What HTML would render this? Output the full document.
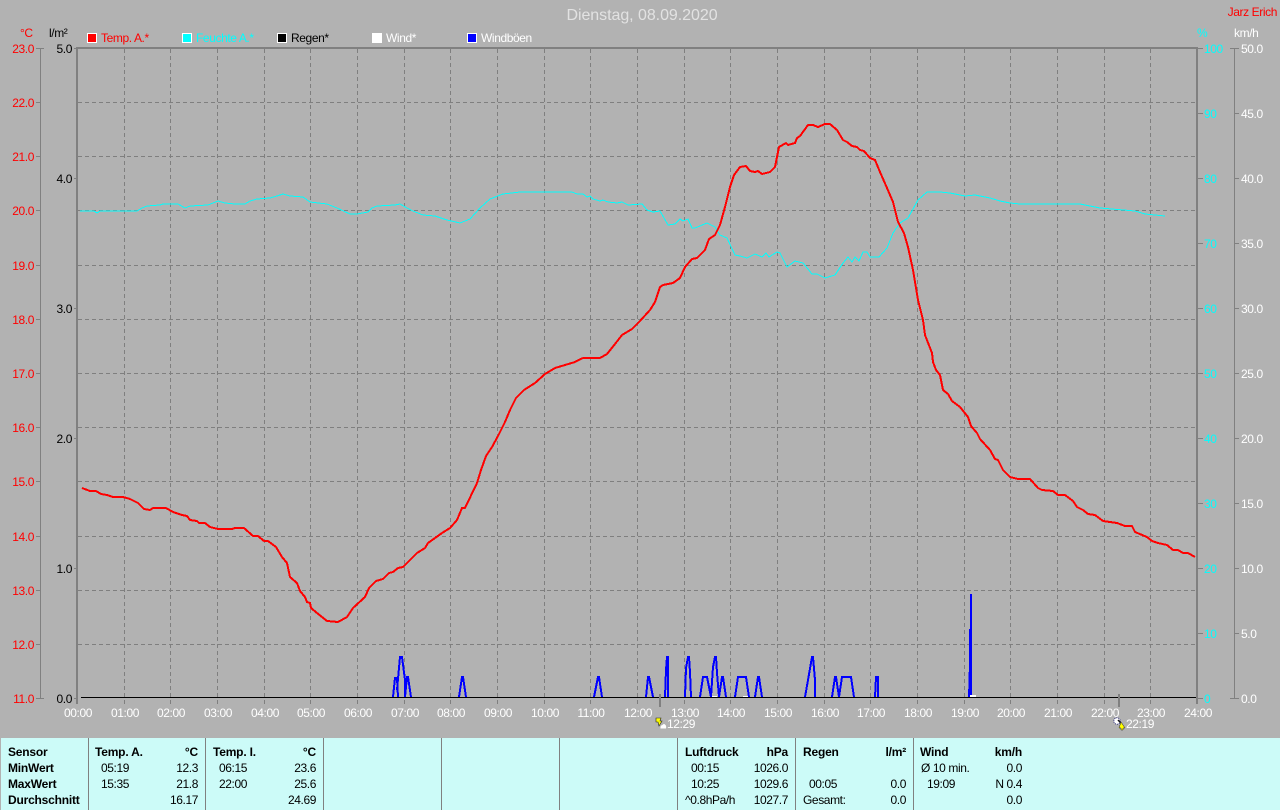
<!DOCTYPE html>
<html><head><meta charset="utf-8"><title>Dienstag, 08.09.2020</title>
<style>
html,body{margin:0;padding:0;background:#b2b2b2;width:1280px;height:810px;overflow:hidden}
svg{display:block}
text{font-family:"Liberation Sans",sans-serif;font-size:12px;letter-spacing:-.4px}
.b text{font-weight:bold;letter-spacing:-.2px}
.e{text-anchor:end}
</style></head><body>
<svg width="1280" height="810" viewBox="0 0 1280 810" xmlns="http://www.w3.org/2000/svg">
<rect width="1280" height="810" fill="#b2b2b2"/>

<text x="642" y="20" text-anchor="middle" fill="#e2e2e2" style="font-size:16px;letter-spacing:-.05px">Dienstag, 08.09.2020</text>
<text x="1277" y="16" class="e" fill="#f00">Jarz Erich</text>

<!-- legend -->
<g stroke="#fff" stroke-width="1" shape-rendering="crispEdges">
<rect x="87.5" y="33.5" width="9" height="9" fill="#f00"/>
<rect x="182.5" y="33.5" width="9" height="9" fill="#0ff"/>
<rect x="277.5" y="33.5" width="9" height="9" fill="#000"/>
<rect x="372.5" y="33.5" width="9" height="9" fill="#fff"/>
<rect x="467.5" y="33.5" width="9" height="9" fill="#00f"/>
</g>
<text x="101" y="42" fill="#f00">Temp. A.*</text>
<text x="196" y="42" fill="#0ff">Feuchte A.*</text>
<text x="291" y="42" fill="#000">Regen*</text>
<text x="386" y="42" fill="#fff">Wind*</text>
<text x="481" y="42" fill="#fff">Windböen</text>

<text x="20" y="37" fill="#f00">°C</text>
<text x="49" y="37" fill="#000">l/m²</text>
<text x="1197" y="37" fill="#0ff">%</text>
<text x="1234" y="37" fill="#fff">km/h</text>

<!-- grid -->
<path shape-rendering="crispEdges" stroke="#7f7f7f" stroke-width="1" stroke-dasharray="4 3" fill="none" d="M124.5 49V704M170.5 49V704M217.5 49V704M264.5 49V704M310.5 49V704M357.5 49V704M404.5 49V704M450.5 49V704M497.5 49V704M544.5 49V704M590.5 49V704M637.5 49V704M684.5 49V704M730.5 49V704M777.5 49V704M824.5 49V704M870.5 49V704M917.5 49V704M964.5 49V704M1010.5 49V704M1057.5 49V704M1104.5 49V704M1150.5 49V704M78 102.5H1196M78 156.5H1196M78 210.5H1196M78 265.5H1196M78 319.5H1196M78 373.5H1196M78 427.5H1196M78 481.5H1196M78 536.5H1196M78 590.5H1196M78 644.5H1196"/>

<!-- axes -->
<g fill="#808080" shape-rendering="crispEdges">
<rect x="76" y="47" width="2" height="657"/>
<rect x="76" y="47" width="1122" height="2"/>
<rect x="1196" y="47" width="2" height="657"/>
<rect x="40" y="48" width="1" height="650"/>
<rect x="1234" y="48" width="1" height="650"/>
</g>
<path shape-rendering="crispEdges" stroke="#808080" stroke-width="1" fill="none" d="M36 48.5H44M36 102.5H40M36 156.5H40M36 210.5H40M36 265.5H40M36 319.5H40M36 373.5H40M36 427.5H40M36 481.5H40M36 536.5H40M36 590.5H40M36 644.5H40M36 698.5H44M74 48.5H76M74 178.5H76M74 308.5H76M74 438.5H76M74 568.5H76M74 698.5H76M1198 48.5H1203M1198 113.5H1203M1198 178.5H1203M1198 243.5H1203M1198 308.5H1203M1198 373.5H1203M1198 438.5H1203M1198 503.5H1203M1198 568.5H1203M1198 633.5H1203M1198 698.5H1203M1230 48.5H1239M1235 113.5H1239M1235 178.5H1239M1235 243.5H1239M1235 308.5H1239M1235 373.5H1239M1235 438.5H1239M1235 503.5H1239M1235 568.5H1239M1235 633.5H1239M1230 698.5H1239"/>

<!-- axis labels -->
<g fill="#f00" class="e">
<text class="e" x="34" y="53">23.0</text><text class="e" x="34" y="107">22.0</text><text class="e" x="34" y="161">21.0</text><text class="e" x="34" y="215">20.0</text><text class="e" x="34" y="270">19.0</text><text class="e" x="34" y="324">18.0</text><text class="e" x="34" y="378">17.0</text><text class="e" x="34" y="432">16.0</text><text class="e" x="34" y="486">15.0</text><text class="e" x="34" y="541">14.0</text><text class="e" x="34" y="595">13.0</text><text class="e" x="34" y="649">12.0</text><text class="e" x="34" y="703">11.0</text>
</g>
<g fill="#000">
<text class="e" x="72" y="53">5.0</text><text class="e" x="72" y="183">4.0</text><text class="e" x="72" y="313">3.0</text><text class="e" x="72" y="443">2.0</text><text class="e" x="72" y="573">1.0</text><text class="e" x="72" y="703">0.0</text>
</g>
<g fill="#0ff">
<text x="1204" y="53">100</text><text x="1204" y="118">90</text><text x="1204" y="183">80</text><text x="1204" y="248">70</text><text x="1204" y="313">60</text><text x="1204" y="378">50</text><text x="1204" y="443">40</text><text x="1204" y="508">30</text><text x="1204" y="573">20</text><text x="1204" y="638">10</text><text x="1204" y="703">0</text>
</g>
<g fill="#fff">
<text x="1241" y="53">50.0</text><text x="1241" y="118">45.0</text><text x="1241" y="183">40.0</text><text x="1241" y="248">35.0</text><text x="1241" y="313">30.0</text><text x="1241" y="378">25.0</text><text x="1241" y="443">20.0</text><text x="1241" y="508">15.0</text><text x="1241" y="573">10.0</text><text x="1241" y="638">5.0</text><text x="1241" y="703">0.0</text>
</g>
<g fill="#fff" text-anchor="middle">
<text x="78" y="717">00:00</text><text x="125" y="717">01:00</text><text x="171" y="717">02:00</text><text x="218" y="717">03:00</text><text x="265" y="717">04:00</text><text x="311" y="717">05:00</text><text x="358" y="717">06:00</text><text x="405" y="717">07:00</text><text x="451" y="717">08:00</text><text x="498" y="717">09:00</text><text x="545" y="717">10:00</text><text x="591" y="717">11:00</text><text x="638" y="717">12:00</text><text x="685" y="717">13:00</text><text x="731" y="717">14:00</text><text x="778" y="717">15:00</text><text x="825" y="717">16:00</text><text x="871" y="717">17:00</text><text x="918" y="717">18:00</text><text x="965" y="717">19:00</text><text x="1011" y="717">20:00</text><text x="1058" y="717">21:00</text><text x="1105" y="717">22:00</text><text x="1151" y="717">23:00</text><text x="1198" y="717">24:00</text>
</g>

<!-- cyan curve -->
<polyline shape-rendering="crispEdges" fill="none" stroke="#0ff" stroke-width="1" points="80,211 94,211 97,213 100,211 137,211 142,208 147,206 160,205 163,204 178,204 185,208 190,206 208,205 213,203 218,201 225,203 235,204 245,204 250,201 257,199 270,198 277,196 283,194 290,196 303,197 310,202 327,204 337,208 350,214 357,214 368,212 372,208 377,206 395,205 400,204 407,208 413,211 423,215 435,216 447,220 460,223 470,219 480,208 490,199 503,194 520,192 572,192 577,194 583,194 587,197 590,196 593,199 600,201 603,200 608,202 617,203 622,202 628,205 642,204 647,210 653,212 660,211 668,225 675,224 680,219 683,221 688,219 692,228 695,228 707,223 715,227 720,235 727,238 735,255 740,256 747,258 755,254 762,257 766,253 769,257 777,252 780,253 787,267 795,261 803,263 812,274 817,274 825,278 835,275 843,263 848,257 852,262 855,257 859,261 863,252 867,252 870,257 879,257 887,248 893,233 900,223 908,218 918,200 927,192 940,192 950,193 965,196 975,195 990,198 1000,201 1010,203 1020,204 1080,204 1100,208 1135,211 1145,214 1165,216"/>

<!-- wind -->
<g shape-rendering="crispEdges" fill="none" stroke="#00f" stroke-width="2">
<polyline points="393,697 395,678 397,678 398,697"/>
<polyline points="397,690 400,657 402,657 405,680 405,697"/>
<polyline points="405,697 407,677 408,677 411,697"/>
<polyline points="459,697 462,677 463,677 466,697"/>
<polyline points="594,697 598,677 599,677 602,697"/>
<polyline points="646,697 648,677 649,677 653,697"/>
<polyline points="665,697 666,670 667,657 668,657 668,697"/>
<polyline points="685,697 686,668 688,657 689,657 690,672 691,697"/>
<polyline points="700,697 703,677 707,677 711,697"/>
<polyline points="711,697 713,667 715,657 716,657 717,673 719,697 722,677 723,677 726,697"/>
<polyline points="735,697 738,677 746,677 749,697"/>
<polyline points="755,697 758,677 759,677 762,697"/>
<polyline points="805,697 808,680 812,657 813,657 815,680 815,697"/>
<polyline points="832,697 835,677 836,677 839,697 842,677 851,677 854,697"/>
<polyline points="875,697 876,677 878,677 878,697"/>
</g>
<polygon shape-rendering="crispEdges" fill="#00f" points="968,697 969,664 969,629 970,629 970,594 972,594 972,697"/>
<g fill="#fff" shape-rendering="crispEdges">
<rect x="712" y="696" width="5" height="1"/><rect x="743" y="696" width="5" height="1"/><rect x="970" y="695" width="6" height="2"/>
</g>

<!-- baseline -->
<rect x="81" y="697" width="1115" height="1" fill="#000" shape-rendering="crispEdges"/>

<!-- red curve -->
<polyline shape-rendering="crispEdges" fill="none" stroke="#f00" stroke-width="2" points="82,488 90,491 96,491 101,494 107,495 113,497 123,497 130,499 138,503 144,509 150,510 153,508 166,508 173,512 182,515 187,516 190,520 197,521 199,523 205,523 210,527 218,529 232,529 235,528 244,528 253,536 258,536 264,541 268,541 276,547 282,557 287,563 290,577 297,583 300,591 305,597 307,602 310,603 311,608 317,613 327,621 338,622 347,617 353,608 365,597 369,588 376,581 383,579 389,573 393,572 398,568 403,567 417,553 425,548 428,543 435,538 442,533 450,528 457,520 462,508 465,508 477,483 481,470 486,456 492,447 498,436 505,422 510,410 516,398 524,390 535,383 545,374 555,368 565,365 575,362 583,358 590,358 600,358 607,354 615,344 622,335 632,329 640,321 650,310 655,302 660,287 663,285 673,283 680,278 685,267 692,259 697,258 705,250 709,239 715,235 720,225 725,207 730,187 734,175 740,167 746,166 750,171 755,172 758,171 762,174 770,172 775,167 779,147 786,143 788,145 795,143 797,138 800,136 808,125 813,125 818,127 825,124 830,124 837,130 843,140 847,142 852,146 857,147 860,150 864,151 870,158 875,160 880,172 887,188 893,202 898,222 904,233 908,247 913,270 918,300 923,320 925,335 932,353 933,362 936,370 940,375 943,390 948,394 952,401 960,407 968,417 971,426 977,433 980,439 990,450 995,459 998,460 1003,470 1010,477 1018,479 1030,479 1038,488 1042,490 1053,491 1058,495 1065,495 1073,501 1077,507 1083,510 1088,514 1095,515 1103,521 1117,523 1125,526 1132,526 1135,532 1147,537 1152,541 1158,543 1167,545 1173,550 1178,550 1183,553 1188,553 1195,557"/>

<!-- event markers -->
<g fill="#808080" shape-rendering="crispEdges"><rect x="659" y="694" width="2" height="13"/><rect x="1118" y="694" width="2" height="13"/></g>
<polygon points="656,718 661,718 660,721 662,721 659,726 658,722 656,722" fill="#ff0" stroke="#222" stroke-width=".6"/>
<path d="M660.5 728.5q-.5-3 2-3.500q1.500-2 3 0q1 1 .5 3.500z" fill="#fff"/>
<text x="667" y="728" fill="#fff">12:29</text>
<circle cx="1117" cy="721" r="3.200" fill="#fff" stroke="#33337f" stroke-width="1" stroke-dasharray="1 1"/>
<path d="M1118 720l2.500 2.500" stroke="#111" stroke-width="1.500"/>
<polygon points="1121,722 1125,728 1123,728 1123,730 1121,730 1121,728 1119,728" fill="#ff0" stroke="#222" stroke-width=".5"/>
<text x="1126" y="728" fill="#fff">22:19</text>

<!-- table -->
<rect x="1" y="738" width="1279" height="72" fill="#ccfbf8" shape-rendering="crispEdges"/>
<path shape-rendering="crispEdges" stroke="#808080" stroke-width="1" d="M88.5 738V810M205.5 738V810M323.5 738V810M441.5 738V810M559.5 738V810M677.5 738V810M795.5 738V810M913.5 738V810"/>
<g class="b" fill="#000">
<text x="8" y="756">Sensor</text><text x="8" y="772">MinWert</text><text x="8" y="788">MaxWert</text><text x="8" y="804">Durchschnitt</text>
<text x="95" y="756">Temp. A.</text><text class="e" x="198" y="756">°C</text>
<text x="213" y="756">Temp. I.</text><text class="e" x="316" y="756">°C</text>
<text x="685" y="756">Luftdruck</text><text class="e" x="788" y="756">hPa</text>
<text x="803" y="756">Regen</text><text class="e" x="906" y="756">l/m²</text>
<text x="920" y="756">Wind</text><text class="e" x="1022" y="756">km/h</text>
</g>
<g fill="#000">
<text x="101" y="772">05:19</text><text class="e" x="198" y="772">12.3</text>
<text x="101" y="788">15:35</text><text class="e" x="198" y="788">21.8</text>
<text class="e" x="198" y="804">16.17</text>
<text x="219" y="772">06:15</text><text class="e" x="316" y="772">23.6</text>
<text x="219" y="788">22:00</text><text class="e" x="316" y="788">25.6</text>
<text class="e" x="316" y="804">24.69</text>
<text x="691" y="772">00:15</text><text class="e" x="788" y="772">1026.0</text>
<text x="691" y="788">10:25</text><text class="e" x="788" y="788">1029.6</text>
<text x="685" y="804">^0.8hPa/h</text><text class="e" x="788" y="804">1027.7</text>
<text x="809" y="788">00:05</text><text class="e" x="906" y="788">0.0</text>
<text x="803" y="804">Gesamt:</text><text class="e" x="906" y="804">0.0</text>
<text x="921" y="772">Ø 10 min.</text><text class="e" x="1022" y="772">0.0</text>
<text x="927" y="788">19:09</text><text class="e" x="1022" y="788">N 0.4</text>
<text class="e" x="1022" y="804">0.0</text>
</g>
</svg>
</body></html>
